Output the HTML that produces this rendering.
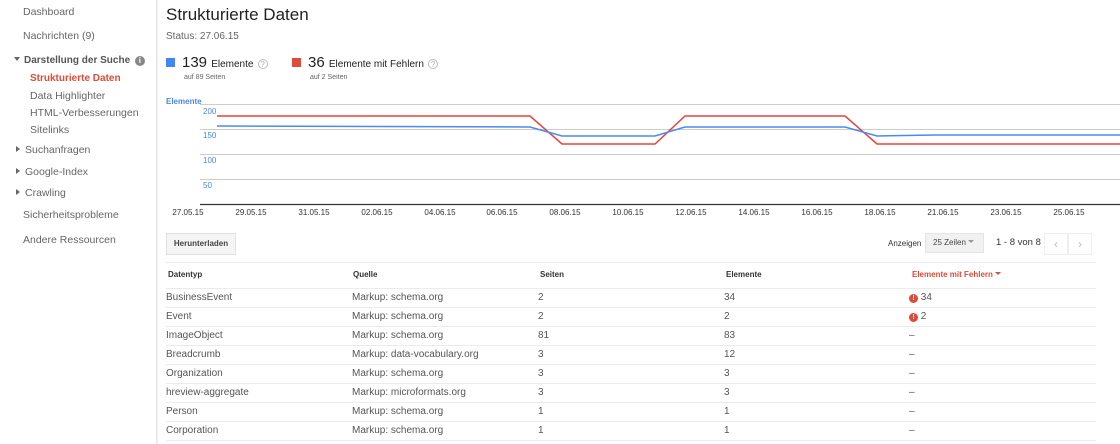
<!DOCTYPE html>
<html><head><meta charset="utf-8"><style>
*{margin:0;padding:0;box-sizing:border-box}
body{width:1120px;height:444px;overflow:hidden;background:#fff;font-family:"Liberation Sans",Arial,sans-serif;color:#222;position:relative}
.a{position:absolute;white-space:nowrap}
.side{position:absolute;left:0;top:0;width:157px;height:444px;border-right:1px solid #e5e5e5;box-shadow:1px 0 2px #eee}
.s{position:absolute;font-size:10.5px;color:#666;white-space:nowrap}
.tri{display:inline-block;width:0;height:0;border-top:3px solid transparent;border-bottom:3px solid transparent;border-left:4px solid #666;margin-right:5px;vertical-align:1px}
.td{position:absolute;font-size:10px;color:#555;white-space:nowrap}
.hl{position:absolute;left:166px;width:930px;height:1px;background:#ebebeb}
</style></head><body>
<div class="side"></div>
<div class="s" style="left:23px;top:6px">Dashboard</div>
<div class="s" style="left:23px;top:30px">Nachrichten (9)</div>
<div class="s" style="left:14px;top:55px;font-weight:bold;color:#555;font-size:10px"><span style="display:inline-block;border-left:3px solid transparent;border-right:3px solid transparent;border-top:4px solid #666;margin-right:4px;vertical-align:2px"></span>Darstellung der Suche <span style="display:inline-block;width:10px;height:10px;border-radius:50%;background:#888;color:#fff;font-size:8px;text-align:center;line-height:10px;margin-left:2px">i</span></div>
<div class="s" style="left:30px;top:73px;font-weight:bold;color:#dd4b39;font-size:10px">Strukturierte Daten</div>
<div class="s" style="left:30px;top:90px">Data Highlighter</div>
<div class="s" style="left:30px;top:107px">HTML-Verbesserungen</div>
<div class="s" style="left:30px;top:124px">Sitelinks</div>
<div class="s" style="left:16px;top:144px"><span class="tri"></span>Suchanfragen</div>
<div class="s" style="left:16px;top:166px"><span class="tri"></span>Google-Index</div>
<div class="s" style="left:16px;top:187px"><span class="tri"></span>Crawling</div>
<div class="s" style="left:23px;top:209px">Sicherheitsprobleme</div>
<div class="s" style="left:23px;top:234px">Andere Ressourcen</div>

<div class="a" style="left:166px;top:5px;font-size:17px;color:#222">Strukturierte Daten</div>
<div class="a" style="left:166px;top:31px;font-size:10px;color:#666">Status: 27.06.15</div>
<div class="a" style="left:166px;top:58px;width:9px;height:9px;background:#4285f4"></div>
<div class="a" style="left:182px;top:54px;font-size:15px;color:#222">139 <span style="font-size:10px">Elemente</span> <span style="display:inline-block;width:10px;height:10px;border:1px solid #bbb;border-radius:50%;font-size:8px;color:#aaa;text-align:center;line-height:9px;vertical-align:0">?</span></div>
<div class="a" style="left:184px;top:74px;font-size:7px;color:#666">auf 89 Seiten</div>
<div class="a" style="left:292px;top:58px;width:9px;height:9px;background:#dd4b39"></div>
<div class="a" style="left:308px;top:54px;font-size:15px;color:#222">36 <span style="font-size:10px">Elemente mit Fehlern</span> <span style="display:inline-block;width:10px;height:10px;border:1px solid #bbb;border-radius:50%;font-size:8px;color:#aaa;text-align:center;line-height:9px;vertical-align:0">?</span></div>
<div class="a" style="left:310px;top:74px;font-size:7px;color:#666">auf 2 Seiten</div>

<svg class="a" style="left:0;top:0" width="1120" height="230">
<g stroke="#ccc" stroke-width="1">
<line x1="200" y1="104.5" x2="1120" y2="104.5"/><line x1="200" y1="129.5" x2="1120" y2="129.5"/>
<line x1="200" y1="154.5" x2="1120" y2="154.5"/><line x1="200" y1="179.5" x2="1120" y2="179.5"/></g>
<line x1="200" y1="204.5" x2="1120" y2="204.5" stroke="#333" stroke-width="1.3"/>
<g font-family="Liberation Sans,sans-serif" font-size="8" fill="#4a86e8">
<text x="166" y="104" font-weight="bold">Elemente</text>
<text x="203" y="114">200</text><text x="203" y="138">150</text><text x="203" y="163">100</text><text x="203" y="188">50</text></g>
<polyline fill="none" stroke="#e8433a" stroke-width="1.5" points="217,116 530,116 562,144 655,144 685,116 845,116 877,144 1120,144"/>
<polyline fill="none" stroke="#4a8af4" stroke-width="1.5" points="217,126 530,127 562,136 655,136 685,127 845,127 877,136 935,135 1120,135"/>
<g font-family="Liberation Sans,sans-serif" font-size="8" fill="#333" text-anchor="middle">
<text x="188" y="215">27.05.15</text><text x="251" y="215">29.05.15</text><text x="314" y="215">31.05.15</text><text x="377" y="215">02.06.15</text><text x="440" y="215">04.06.15</text><text x="502" y="215">06.06.15</text><text x="565" y="215">08.06.15</text><text x="628" y="215">10.06.15</text><text x="691" y="215">12.06.15</text><text x="754" y="215">14.06.15</text><text x="817" y="215">16.06.15</text><text x="880" y="215">18.06.15</text><text x="943" y="215">21.06.15</text><text x="1006" y="215">23.06.15</text><text x="1069" y="215">25.06.15</text></g>
</svg>

<div class="a" style="left:166px;top:233px;width:70px;height:22px;background:#f5f5f5;border:1px solid #e0e0e0;font-size:8px;font-weight:bold;color:#444;text-align:center;line-height:20px">Herunterladen</div>
<div class="a" style="left:888px;top:239px;font-size:8px;color:#333">Anzeigen</div>
<div class="a" style="left:925px;top:233px;width:59px;height:20px;background:#f1f1f1;border:1px solid #e5e5e5;font-size:8px;color:#444;line-height:18px;padding-left:7px">25 Zeilen <span style="display:inline-block;border-left:3px solid transparent;border-right:3px solid transparent;border-top:3px solid #999;vertical-align:2px"></span></div>
<div class="a" style="left:996px;top:237px;font-size:9.5px;color:#333">1 - 8 von 8</div>
<div class="a" style="left:1044px;top:233px;width:24px;height:22px;border:1px solid #eee;color:#bbb;font-size:12px;text-align:center;line-height:20px">&#8249;</div>
<div class="a" style="left:1068px;top:233px;width:24px;height:22px;border:1px solid #eee;color:#bbb;font-size:12px;text-align:center;line-height:20px">&#8250;</div>

<div class="hl" style="top:262px"></div>
<div class="td" style="left:168px;top:270px;font-weight:bold;font-size:8px;color:#333">Datentyp</div>
<div class="td" style="left:353px;top:270px;font-weight:bold;font-size:8px;color:#333">Quelle</div>
<div class="td" style="left:540px;top:270px;font-weight:bold;font-size:8px;color:#333">Seiten</div>
<div class="td" style="left:726px;top:270px;font-weight:bold;font-size:8px;color:#333">Elemente</div>
<div class="td" style="left:912px;top:270px;font-weight:bold;font-size:8px;color:#dd4b39">Elemente mit Fehlern <span style="display:inline-block;border-left:3px solid transparent;border-right:3px solid transparent;border-top:3px solid #dd4b39;vertical-align:2px"></span></div>
<div class="hl" style="top:288px"></div>
<div class="hl" style="top:307px"></div><div class="hl" style="top:326px"></div><div class="hl" style="top:345px"></div><div class="hl" style="top:364px"></div><div class="hl" style="top:383px"></div><div class="hl" style="top:402px"></div><div class="hl" style="top:421px"></div><div class="hl" style="top:440px"></div>

<div class="td" style="left:166px;top:292px">BusinessEvent</div><div class="td" style="left:352px;top:292px">Markup: schema.org</div><div class="td" style="left:538px;top:292px">2</div><div class="td" style="left:724px;top:292px">34</div><div class="td" style="left:909px;top:292px"><span style="display:inline-block;width:9px;height:9px;border-radius:50%;background:#dd4b39;color:#fff;font-size:7px;font-weight:bold;text-align:center;line-height:9px;vertical-align:0">!</span> 34</div>
<div class="td" style="left:166px;top:311px">Event</div><div class="td" style="left:352px;top:311px">Markup: schema.org</div><div class="td" style="left:538px;top:311px">2</div><div class="td" style="left:724px;top:311px">2</div><div class="td" style="left:909px;top:311px"><span style="display:inline-block;width:9px;height:9px;border-radius:50%;background:#dd4b39;color:#fff;font-size:7px;font-weight:bold;text-align:center;line-height:9px;vertical-align:0">!</span> 2</div>
<div class="td" style="left:166px;top:330px">ImageObject</div><div class="td" style="left:352px;top:330px">Markup: schema.org</div><div class="td" style="left:538px;top:330px">81</div><div class="td" style="left:724px;top:330px">83</div><div class="td" style="left:909px;top:330px">–</div>
<div class="td" style="left:166px;top:349px">Breadcrumb</div><div class="td" style="left:352px;top:349px">Markup: data-vocabulary.org</div><div class="td" style="left:538px;top:349px">3</div><div class="td" style="left:724px;top:349px">12</div><div class="td" style="left:909px;top:349px">–</div>
<div class="td" style="left:166px;top:368px">Organization</div><div class="td" style="left:352px;top:368px">Markup: schema.org</div><div class="td" style="left:538px;top:368px">3</div><div class="td" style="left:724px;top:368px">3</div><div class="td" style="left:909px;top:368px">–</div>
<div class="td" style="left:166px;top:387px">hreview-aggregate</div><div class="td" style="left:352px;top:387px">Markup: microformats.org</div><div class="td" style="left:538px;top:387px">3</div><div class="td" style="left:724px;top:387px">3</div><div class="td" style="left:909px;top:387px">–</div>
<div class="td" style="left:166px;top:406px">Person</div><div class="td" style="left:352px;top:406px">Markup: schema.org</div><div class="td" style="left:538px;top:406px">1</div><div class="td" style="left:724px;top:406px">1</div><div class="td" style="left:909px;top:406px">–</div>
<div class="td" style="left:166px;top:425px">Corporation</div><div class="td" style="left:352px;top:425px">Markup: schema.org</div><div class="td" style="left:538px;top:425px">1</div><div class="td" style="left:724px;top:425px">1</div><div class="td" style="left:909px;top:425px">–</div>
</body></html>
